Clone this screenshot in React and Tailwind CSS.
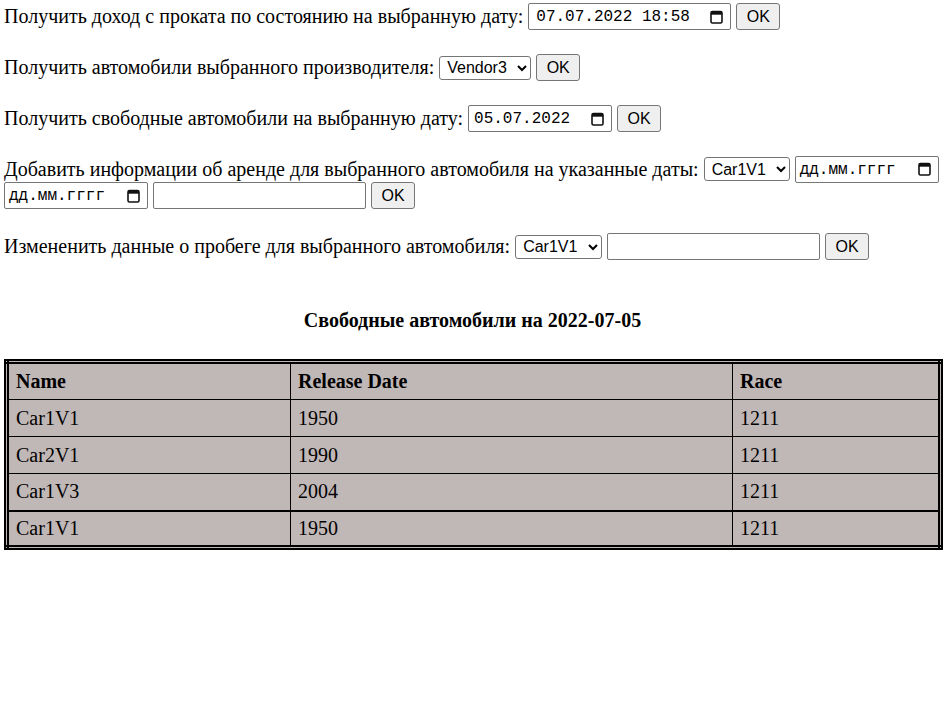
import React from "react";

const inputBase =
  "border border-[#767676] rounded-[2px] bg-white text-black h-[27px] box-border";
const monoFont = "[font-family:'Liberation_Mono','DejaVu_Sans_Mono',monospace]";
const selectCls =
  "border border-[#767676] rounded-[3px] bg-white text-black h-[24px] box-border text-[16px] pl-[3px] pr-[2px] [font-family:'Liberation_Sans',Arial,sans-serif] appearance-auto";
const btnCls =
  "border border-[#767676] rounded-[3px] bg-[#efefef] text-black h-[27px] w-[44px] box-border text-[16px] [font-family:'Liberation_Sans',Arial,sans-serif]";
const textCls =
  inputBase + " w-[213px] px-[3px] text-[16px] [font-family:'Liberation_Sans',Arial,sans-serif]";

function CalendarIcon() {
  return (
    <svg width="13" height="14" viewBox="0 0 13 14" className="shrink-0">
      <rect x="1" y="1.5" width="11" height="11.5" rx="1.5" fill="none" stroke="#111" strokeWidth="1.6" />
      <rect x="1" y="1.5" width="11" height="3.2" fill="#111" />
    </svg>
  );
}

function DateBox({ value, width, pad = "pl-[4px]" }) {
  return (
    <div
      className={
        inputBase +
        " flex items-center justify-between pr-[7px] text-[16px] leading-none " +
        pad +
        " " +
        monoFont +
        " " +
        width
      }
    >
      <span className="whitespace-pre pt-[1px]">{value}</span>
      <CalendarIcon />
    </div>
  );
}

function Btn() {
  return (
    <button type="button" className={btnCls}>
      OK
    </button>
  );
}

const rows = [
  { name: "Car1V1", date: "1950", race: "1211" },
  { name: "Car2V1", date: "1990", race: "1211" },
  { name: "Car1V3", date: "2004", race: "1211" },
  { name: "Car1V1", date: "1950", race: "1211", thick: true },
];

export default function App() {
  return (
    <div className="min-h-[708px] bg-white text-black text-[20px] leading-[23px] [font-family:'Liberation_Serif','Times_New_Roman',serif] pl-[4px] pt-[3px]">
      <div className="flex items-center gap-[5px] h-[27px] whitespace-nowrap">
        <span>Получить доход с проката по состоянию на выбранную дату:</span>
        <DateBox value="07.07.2022 18:58" width="w-[203px]" pad="pl-[7px]" />
        <Btn />
      </div>

      <div className="flex items-center gap-[5px] h-[27px] mt-[24px] whitespace-nowrap">
        <span>Получить автомобили выбранного производителя:</span>
        <select defaultValue="Vendor3" className={selectCls + " w-[92px]"}>
          <option>Vendor1</option>
          <option>Vendor2</option>
          <option>Vendor3</option>
        </select>
        <Btn />
      </div>

      <div className="flex items-center gap-[5px] h-[27px] mt-[24px] whitespace-nowrap">
        <span>Получить свободные автомобили на выбранную дату:</span>
        <DateBox value="05.07.2022" width="w-[144px]" pad="pl-[5px]" />
        <Btn />
      </div>

      <div className="flex items-center gap-[5px] h-[26px] mt-[24px] whitespace-nowrap">
        <span>Добавить информации об аренде для выбранного автомобиля на указанные даты:</span>
        <select defaultValue="Car1V1" className={selectCls + " w-[86px]"}>
          <option>Car1V1</option>
          <option>Car2V1</option>
          <option>Car1V3</option>
        </select>
        <DateBox value="дд.мм.гггг" width="w-[144px]" />
      </div>
      <div className="flex items-center gap-[5px] h-[27px] whitespace-nowrap">
        <DateBox value="дд.мм.гггг" width="w-[144px]" />
        <input type="text" className={textCls} />
        <Btn />
      </div>

      <div className="flex items-center gap-[5px] h-[27px] mt-[24px] whitespace-nowrap">
        <span>Измененить данные о пробеге для выбранного автомобиля:</span>
        <select defaultValue="Car1V1" className={selectCls + " w-[87px]"}>
          <option>Car1V1</option>
          <option>Car2V1</option>
          <option>Car1V3</option>
        </select>
        <input type="text" className={textCls} />
        <Btn />
      </div>

      <h2 className="text-center font-bold text-[20px] leading-[23px] mt-[49px] mb-[27px] pr-[4px]">
        Свободные автомобили на 2022-07-05
      </h2>

      <table className="w-[939px] border-collapse border-[5px] border-double border-black bg-[#c0b7b7]">
        <thead>
          <tr>
            <th className="border border-black text-left px-[7px] h-[38px] w-[284px]">Name</th>
            <th className="border border-black text-left px-[7px] h-[38px] w-[442px]">Release Date</th>
            <th className="border border-black text-left px-[7px] h-[38px]">Race</th>
          </tr>
        </thead>
        <tbody>
          {rows.map((r, i) => (
            <tr key={i}>
              <td className={"border border-black px-[7px] h-[37px]" + (r.thick ? " border-t-2" : "")}>{r.name}</td>
              <td className={"border border-black px-[7px] h-[37px]" + (r.thick ? " border-t-2" : "")}>{r.date}</td>
              <td className={"border border-black px-[7px] h-[37px]" + (r.thick ? " border-t-2" : "")}>{r.race}</td>
            </tr>
          ))}
        </tbody>
      </table>
    </div>
  );
}
